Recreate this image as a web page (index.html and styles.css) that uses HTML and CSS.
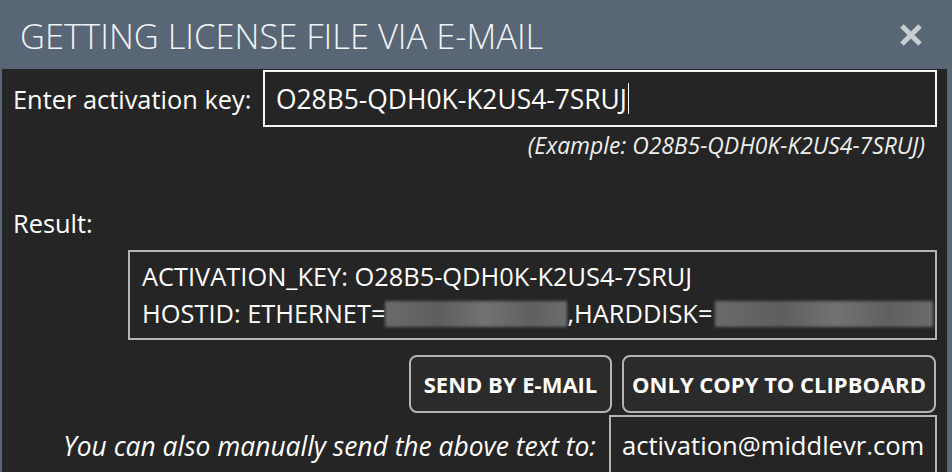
FILE: index.html
```html
<!DOCTYPE html>
<html>
<head>
<meta charset="utf-8">
<link rel="stylesheet" href="styles.css">
</head>
<body>
<div class="window">
  <header class="titlebar">
    <h1 class="title">GETTING LICENSE FILE VIA E-MAIL</h1>
    <svg class="close" width="24" height="24" viewBox="0 0 24 24" aria-label="Close">
      <path d="M3 3 L21 21 M21 3 L3 21" stroke="#c9cdd2" stroke-width="5" stroke-linecap="butt" fill="none"/>
    </svg>
  </header>
  <main class="content">
    <div class="key-row">
      <label class="label key-label">Enter activation key:</label>
      <div class="key-input"><span class="key-text">O28B5-QDH0K-K2US4-7SRUJ</span><span class="caret"></span></div>
    </div>
    <div class="example">(Example: O28B5-QDH0K-K2US4-7SRUJ)</div>
    <div class="label result-label">Result:</div>
    <div class="result-box">
      <div class="result-line">ACTIVATION_KEY: O28B5-QDH0K-K2US4-7SRUJ</div>
      <div class="result-line">HOSTID: ETHERNET=<span class="blur blur-eth"></span>,HARDDISK=<span class="blur blur-hdd"></span></div>
    </div>
    <div class="buttons">
      <button class="btn btn-send">SEND BY E-MAIL</button>
      <button class="btn btn-copy">ONLY COPY TO CLIPBOARD</button>
    </div>
    <div class="manual-row">
      <span class="manual-text">You can also manually send the above text to:</span>
      <div class="email-box">activation@middlevr.com</div>
    </div>
  </main>
</div>
</body>
</html>
```

FILE: styles.css
```css
html, body {
  margin: 0;
  padding: 0;
}
body {
  width: 952px;
  height: 472px;
  overflow: hidden;
  background: #586675;
  font-family: "Open Sans", "Noto Sans", sans-serif;
  color: #ffffff;
}
.window {
  display: flex;
  flex-direction: column;
  height: 472px;
}
.titlebar {
  height: 69px;
  flex: 0 0 69px;
  display: flex;
  align-items: center;
  justify-content: space-between;
  padding: 0 29px 0 20px;
  box-sizing: border-box;
}
.title {
  margin: 0;
  font-weight: 300;
  font-size: 34.5px;
  color: #f2f4f6;
  line-height: 1;
  padding-top: 3px;
  white-space: nowrap;
}
.close {
  display: block;
}
.content {
  flex: 1;
  margin: 0 5px 0 2px;
  background: #252525;
  padding: 1px 10px 0 11px;
  display: flex;
  flex-direction: column;
  overflow: hidden;
}
.content > * {
  flex-shrink: 0;
}
.label {
  font-size: 25.4px;
  color: #ffffff;
}
.key-row {
  display: flex;
  align-items: center;
  height: 57px;
}
.key-label {
  flex: 0 0 250px;
  white-space: nowrap;
}
.key-input {
  flex: 1;
  height: 57px;
  box-sizing: border-box;
  border: 2px solid #f4f4f4;
  display: flex;
  align-items: center;
  padding-left: 11px;
  font-size: 26.4px;
}
.caret {
  display: inline-block;
  width: 1px;
  height: 31px;
  background: #ffffff;
  margin-left: 1px;
}
.example {
  text-align: right;
  font-style: italic;
  font-size: 22.9px;
  color: #eeeeee;
  padding-right: 12px;
  margin-top: 5px;
  line-height: 28px;
  white-space: nowrap;
}
.result-label {
  margin-top: 47px;
  line-height: 32px;
}
.result-box {
  margin: 11px 0 0 115px;
  height: 90px;
  box-sizing: border-box;
  border: 2px solid #b4b4b4;
  padding: 6px 0 0 12px;
  font-size: 25.4px;
}
.result-line {
  line-height: 37px;
  height: 37px;
  white-space: nowrap;
  display: flex;
  align-items: center;
}
.blur {
  display: inline-block;
  height: 26px;
  background: linear-gradient(90deg, #6a6a6a, #5e5e5e 30%, #727272 55%, #606060 80%, #6c6c6c);
  filter: blur(1.5px);
}
.blur-eth {
  width: 182px;
}
.blur-hdd {
  width: 218px;
  margin-left: 3px;
}
.buttons {
  display: flex;
  justify-content: flex-end;
  gap: 10px;
  margin-top: 15px;
  padding-right: 1px;
}
.btn {
  height: 58px;
  box-sizing: border-box;
  border: 2px solid #b4b4b4;
  border-radius: 8px;
  background: #2b2b2b;
  color: #ffffff;
  font-family: "Open Sans", "Noto Sans", sans-serif;
  font-weight: 700;
  font-size: 22px;
  padding: 0;
  white-space: nowrap;
}
.btn-send {
  width: 203px;
}
.btn-copy {
  width: 314px;
}
.manual-row {
  display: flex;
  justify-content: flex-end;
  align-items: flex-start;
  gap: 13px;
  margin-top: 2px;
}
.manual-text {
  font-style: italic;
  font-size: 26.4px;
  line-height: 62px;
  white-space: nowrap;
}
.email-box {
  width: 328px;
  height: 70px;
  box-sizing: border-box;
  border: 2px solid #b4b4b4;
  border-bottom: none;
  padding: 11px 0 0 11px;
  font-size: 25.6px;
  white-space: nowrap;
}
```
